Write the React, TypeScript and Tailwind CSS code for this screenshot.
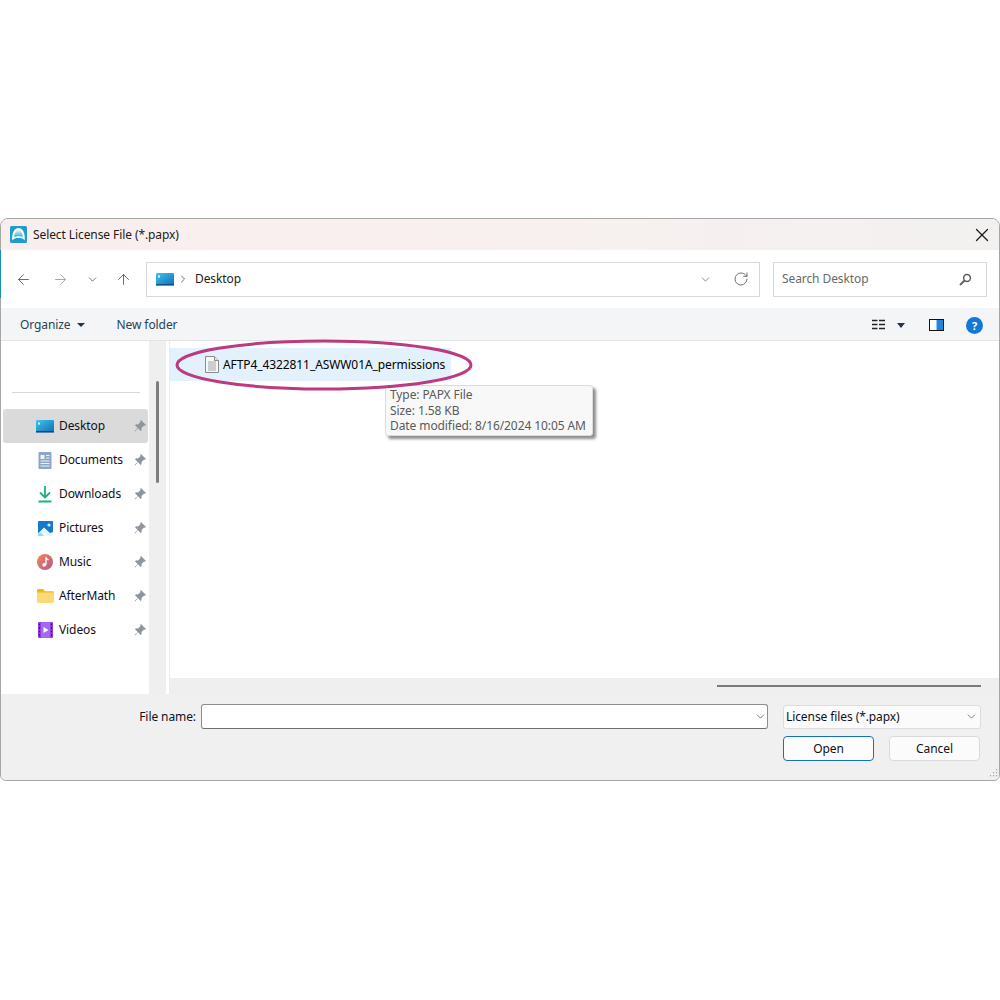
import React from "react";
import { ArrowLeft, ArrowRight, ArrowUp, ChevronDown, ChevronRight, RotateCw, X } from "lucide-react";

const DesktopIcon = ({ w = 18 }: { w?: number }) => (
  <svg width={w} height={(w * 13) / 18} viewBox="0 0 18 13">
    <defs>
      <linearGradient id="dsk" x1="0" y1="0" x2="1" y2="1">
        <stop offset="0" stopColor="#3fc4ee" />
        <stop offset="1" stopColor="#0f6fb5" />
      </linearGradient>
    </defs>
    <rect x="0" y="0" width="18" height="12" rx="1.2" fill="url(#dsk)" />
    <rect x="2" y="2.5" width="2" height="2" fill="#e6f8ff" />
    <rect x="0" y="11" width="18" height="1.6" fill="#0c4f86" />
  </svg>
);

const DocsIcon = () => (
  <svg width="14" height="17" viewBox="0 0 14 17">
    <rect width="13" height="17" x="0.5" rx="1" fill="#8fa5c4" />
    <rect x="2.5" y="3" width="4" height="4" fill="#eef3fa" />
    <path d="M8 3.5h3.5M8 6h3.5M2.5 9h9M2.5 11.5h9M2.5 14h9" stroke="#eef3fa" strokeWidth="1" />
  </svg>
);

const DownloadIcon = () => (
  <svg width="14" height="17" viewBox="0 0 14 17">
    <path d="M7 0v10.5M2 6.5l5 5 5-5" fill="none" stroke="#1fae84" strokeWidth="1.8" />
    <path d="M0.5 15.5h13" stroke="#14b57f" strokeWidth="2" />
  </svg>
);

const PicturesIcon = () => (
  <svg width="15" height="15" viewBox="0 0 15 15">
    <rect width="15" height="15" rx="1" fill="#1279cf" />
    <circle cx="11" cy="4" r="1.6" fill="#d9f1ff" />
    <path d="M0 15V12.5L6 6.5l6 5.5 3-1V15z" fill="#e9f6ff" />
    <path d="M0 15v-2l2.5-1.5L6 15z" fill="#9fd3f5" />
  </svg>
);

const MusicIcon = () => (
  <svg width="16" height="16" viewBox="0 0 16 16">
    <defs>
      <linearGradient id="mus" x1="0" y1="0" x2="1" y2="1">
        <stop offset="0" stopColor="#ec8a58" />
        <stop offset="1" stopColor="#b9548f" />
      </linearGradient>
    </defs>
    <circle cx="8" cy="8" r="8" fill="url(#mus)" />
    <path d="M9 3.5v7.2" stroke="#fff" strokeWidth="1.4" />
    <path d="M9 3.5c.4 1.6 1.6 1.8 2.5 2.4" stroke="#fff" strokeWidth="1.2" fill="none" />
    <circle cx="7.2" cy="10.8" r="1.9" fill="#fff" />
  </svg>
);

const FolderIcon = () => (
  <svg width="17" height="14" viewBox="0 0 17 14">
    <path d="M0 1.2C0 .5.5 0 1.2 0H6l2 2.2h7.8c.7 0 1.2.5 1.2 1.2V5H0z" fill="#f2b90f" />
    <path d="M0 3.6h17v9.2c0 .7-.5 1.2-1.2 1.2H1.2C.5 14 0 13.5 0 12.8z" fill="#fbd979" />
  </svg>
);

const VideosIcon = () => (
  <svg width="15" height="16" viewBox="0 0 15 16">
    <rect width="15" height="16" rx="1" fill="#8a3fdc" />
    <rect x="3" y="0" width="9" height="16" fill="#a469ee" />
    <path d="M5.5 5v6l5-3z" fill="#fff" />
    <path d="M1 2.5h1M1 6h1M1 9.5h1M1 13h1M13 2.5h1M13 6h1M13 9.5h1M13 13h1" stroke="#21103f" strokeWidth="1.4" />
  </svg>
);

const Pin = () => (
  <svg width="12" height="12" viewBox="0 0 12 12">
    <path d="M7 0l5 5-1 .8-1-.3-2.5 2.5.2 2-1 1L4 8.300 1 11.500.5 11 3.700 8 1 5.300l1-1 2 .2L6.500 2l-.3-1z" fill="#8f959c" />
  </svg>
);

const AppLogo = () => (
  <svg width="17" height="17" viewBox="0 0 17 17">
    <defs>
      <linearGradient id="dome" x1="0" y1="0" x2="0" y2="1">
        <stop offset="0" stopColor="#e8f8ff" />
        <stop offset="1" stopColor="#2aa6d6" />
      </linearGradient>
    </defs>
    <rect width="17" height="17" rx="1.5" fill="#1f9ccc" />
    <path d="M2.400 14.400C1.400 7 4.500 2 8.500 2s7.100 5 6.100 12.400C13.300 12.600 11.500 12 8.500 12s-4.800.6-6.100 2.400z" fill="#fff" />
    <path d="M4.400 11.200C4 7.500 6 4 8.500 4s4.500 3.500 4.100 7.200C11.600 10.500 10 10.200 8.500 10.200s-3.100.3-4.100 1z" fill="url(#dome)" />
  </svg>
);

const items: [string, React.ReactNode][] = [
  ["Desktop", <DesktopIcon />],
  ["Documents", <DocsIcon />],
  ["Downloads", <DownloadIcon />],
  ["Pictures", <PicturesIcon />],
  ["Music", <MusicIcon />],
  ["AfterMath", <FolderIcon />],
  ["Videos", <VideosIcon />],
];

const font = "font-['Noto_Sans','Open_Sans',sans-serif]";

export default function App() {
  return (
    <div className={`w-[1000px] h-[1000px] bg-white pt-[218px] text-[12px] tracking-[-0.09px] leading-[16px] text-[#101020] ${font}`}>
      <div className="relative w-[1000px] h-[563px]">
        <div className="w-full h-full flex flex-col overflow-hidden rounded-t-[8px] rounded-b-[6px] border border-[#a6a6a6] bg-[#f0f0f0]">
          {/* title */}
          <div className="h-[31px] shrink-0 flex items-center pl-[9px] pr-[6px] bg-gradient-to-r from-[#f8eeee] via-[#f8f0ef] to-[#f2f1f0]">
            <AppLogo />
            <span className="ml-[6px] text-[#1c1c1c]">Select License File (*.papx)</span>
            <X className="ml-auto text-[#1c1c1c]" size={22} strokeWidth={1.4} />
          </div>

          {/* nav */}
          <div className="h-[58px] shrink-0 bg-white flex items-center">
            <ArrowLeft className="ml-[14px] text-[#606060]" size={17} strokeWidth={1.3} />
            <ArrowRight className="ml-[20px] text-[#a0a0a0]" size={17} strokeWidth={1.3} />
            <ChevronDown className="ml-[17px] text-[#606060]" size={13} strokeWidth={1.6} />
            <ArrowUp className="ml-[16px] text-[#606060]" size={17} strokeWidth={1.3} />
            <div className="ml-[14px] w-[614px] h-[35px] border border-[#d9d9d9] flex items-center pl-[9px] pr-[10px]">
              <DesktopIcon />
              <ChevronRight className="ml-[3px] text-[#606060]" size={12} strokeWidth={1.8} />
              <span className="ml-[6px] text-[#1c1c1c]">Desktop</span>
              <ChevronDown className="ml-auto mr-[1px] text-[#707070]" size={13} strokeWidth={1.4} />
              <RotateCw className="ml-[20px] text-[#707070]" size={16} strokeWidth={1.5} />
            </div>
            <div className="ml-[13px] w-[214px] h-[35px] border border-[#d9d9d9] flex items-center pl-[8px] pr-[14px]">
              <span className="text-[#6a6a6a]">Search Desktop</span>
              <svg className="ml-auto" width="13" height="13" viewBox="0 0 13 13">
                <circle cx="8" cy="5" r="3.400" fill="none" stroke="#5f5f5f" strokeWidth="1.500" />
                <path d="M5.500 7.500L1 12" stroke="#5f5f5f" strokeWidth="1.800" />
              </svg>
            </div>
          </div>

          {/* toolbar */}
          <div className="h-[33px] shrink-0 pt-[2px] bg-[#f4f5f7] border-b border-[#e4e4e4] flex items-center pl-[19px] pr-[16px]">
            <span className="text-[#26425c]">Organize</span>
            <span className="ml-[6px] w-0 h-0 border-x-[4px] border-x-transparent border-t-[4px] border-t-[#1f3550]" />
            <span className="ml-[32px] text-[#26425c]">New folder</span>
            <svg className="ml-auto" width="14" height="12" viewBox="0 0 14 12">
              <path d="M1 1.500h5.500M1 5.500h5.500M1 9.500h5.500M8 1.500h6M8 5.500h6M8 9.500h6" stroke="#222" strokeWidth="1.700" />
            </svg>
            <span className="ml-[12px] w-0 h-0 border-x-[4.500px] border-x-transparent border-t-[5px] border-t-[#1f3550]" />
            <span className="ml-[24px] w-[15px] h-[12px] border-[1.500px] border-[#111] bg-gradient-to-r from-white from-45% to-[#1a8ae0] to-55%" />
            <span className="ml-[22px] w-[17px] h-[17px] rounded-full bg-[#1279d6] text-white text-[11px] leading-[17px] font-bold text-center">?</span>
          </div>

          {/* main */}
          <div className="relative flex-1 flex min-h-0 bg-white">
            <div className="w-[148px] shrink-0 bg-white pl-[2px] pt-[51px]">
              <div className="ml-[9px] w-[128px] h-px bg-[#d8d8d8] mb-[16px]" />
              {items.map(([label, icon], i) => (
                <div
                  key={label}
                  className={`h-[34px] w-[145px] flex items-center rounded-[3px] ${i === 0 ? "bg-[#dadada]" : ""}`}
                >
                  <div className="ml-[32px] w-[20px] flex justify-center">{icon}</div>
                  <span className="ml-[4px]">{label}</span>
                  <span className="ml-auto mr-[2px]">
                    <Pin />
                  </span>
                </div>
              ))}
            </div>

            <div className="w-[17px] shrink-0 bg-[#efefef] pt-[40px] pl-[7px]">
              <div className="w-[3px] h-[102px] rounded bg-[#7d7d7d]" />
            </div>
            <div className="w-[3px] shrink-0 bg-white" />

            <div className="flex-1 flex flex-col border-l border-[#ececec]">
              <div className="flex-1 pt-[7px]">
                <div className="h-[33px] w-[281px] bg-[#e3f1fc] flex items-center pl-[35px]">
                  <svg width="14" height="17" viewBox="0 0 14 17">
                    <path d="M.5.500h9l4 4v12H.5z" fill="#f7f7f7" stroke="#8a8a8a" />
                    <path d="M9.500.500v4h4" fill="#e4e4e4" stroke="#8a8a8a" />
                    <path d="M3 6h8M3 8h8M3 10h8M3 12h8M3 14h8" stroke="#a4a4a4" />
                  </svg>
                  <span className="ml-[4px] text-black">AFTP4_4322811_ASWW01A_permissions</span>
                </div>
              </div>
              <div className="h-[16px] shrink-0 bg-[#efefef] flex justify-end items-center pr-[18px]">
                <div className="w-[264px] h-[2px] bg-[#7a7a7a]" />
              </div>
            </div>

            {/* tooltip */}
            <div className="absolute left-[384px] top-[44px] w-[208px] h-[51px] rounded-[3px] border border-[#dcdcdc] bg-[#f8f8f8] pl-[4px] pt-[1px] text-[#5a5a5a] shadow-[3px_3px_3px_rgba(0,0,0,0.45)]">
              <div className="leading-[15.500px]">Type: PAPX File</div>
              <div className="leading-[15.500px]">Size: 1.58 KB</div>
              <div className="leading-[15.500px]">Date modified: 8/16/2024 10:05 AM</div>
            </div>

            {/* annotation */}
            <svg className="absolute left-[169px] top-[-4px]" width="310" height="60" viewBox="0 0 310 60">
              <ellipse cx="154" cy="28" rx="147" ry="24" fill="none" stroke="#bb3a80" strokeWidth="3" />
            </svg>
          </div>

          {/* footer */}
          <div className="h-[86px] shrink-0 bg-[#f0f0f0] pt-[10px] relative">
            <div className="flex items-center h-[25px]">
              <span className="w-[195px] text-right">File name:</span>
              <div className="ml-[5px] w-[567px] h-[25px] rounded-[3px] border border-[#8d8d8d] border-b-[#6e6e6e] bg-white flex items-center justify-end pr-[0px]">
                <ChevronDown className="text-[#606060]" size={13} strokeWidth={1.5} />
              </div>
              <div className="ml-[15px] w-[198px] h-[24px] rounded-[3px] border border-[#dcdcdc] bg-[#fbfbfb] flex items-center pl-[2px] pr-[2px]">
                License files (*.papx)
                <ChevronDown className="ml-auto text-[#606060]" size={13} strokeWidth={1.5} />
              </div>
            </div>
            <div className="flex mt-[7px] pl-[782px]">
              <button className="w-[91px] h-[25px] rounded-[4px] border border-[#1272bd] bg-[#fcfcfc] text-center">Open</button>
              <button className="ml-[15px] w-[91px] h-[25px] rounded-[4px] border border-[#dadada] bg-[#fbfbfb] text-center">Cancel</button>
            </div>
            <svg className="absolute right-[1px] bottom-[1px]" width="10" height="10" viewBox="0 0 10 10">
              <path d="M8 0h1.200v1.200H8zM8 3h1.200v1.200H8zM8 6h1.200v1.200H8zM5 3h1.200v1.200H5zM5 6h1.200v1.200H5zM2 6h1.200v1.200H2z" fill="#a8a8a8" />
            </svg>
          </div>
        </div>
        <span className="absolute left-0 top-[32px] w-[1px] h-[48px] bg-[#1a8ea8]" />
      </div>
    </div>
  );
}
